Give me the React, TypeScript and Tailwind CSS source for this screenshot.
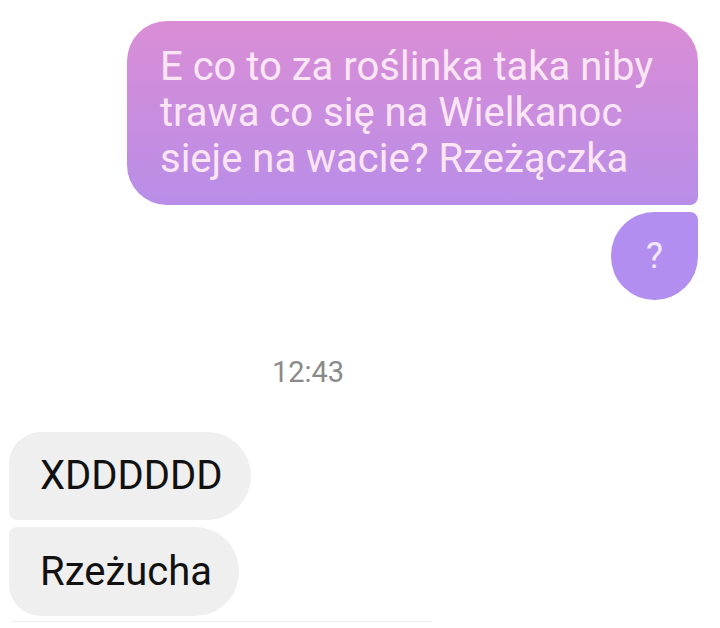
import React from 'react';

const App: React.FC = () => {
  return (
    <div className="w-[720px] h-[628px] bg-white overflow-hidden flex flex-col font-['Roboto',sans-serif]">
      {/* Sent messages */}
      <div className="flex flex-col items-end pr-[22px] pt-[21px] gap-[7px]">
        <div className="w-[571px] h-[184px] rounded-[40px] rounded-br-[8px] bg-gradient-to-b from-[#da8dd5] to-[#b88de8] pl-[33px] pt-[23px] text-[40px] leading-[46px] text-[#fce6f6]">
          E co to za roślinka taka niby
          <br />
          trawa co się na Wielkanoc
          <br />
          sieje na wacie? Rzeżączka
        </div>
        <div className="w-[87px] h-[88px] rounded-[44px] rounded-tr-[8px] bg-[#b28ef0] flex items-center justify-center text-[36px] text-[#f3e8ff]">
          ?
        </div>
      </div>

      {/* Timestamp */}
      <div className="mt-[55px] w-[616px] text-center text-[29px] leading-[34px] text-[#8a8a8a]">12:43</div>

      {/* Received messages */}
      <div className="mt-[43px] flex flex-col items-start pl-[9px] gap-[7px]">
        <div className="h-[88px] w-[242px] rounded-[44px] rounded-l-[32px] rounded-bl-[8px] bg-[#efefef] flex items-center pl-[31px] text-[40px] text-[#111]">
          XDDDDDD
        </div>
        <div className="h-[89px] w-[230px] rounded-[44px] rounded-l-[32px] rounded-tl-[8px] bg-[#efefef] flex items-center pl-[31px] text-[40px] text-[#111]">
          Rzeżucha
        </div>
      </div>
      <div className="mt-[5px] ml-[12px] w-[420px] h-px bg-[#eeeeee]" />
    </div>
  );
};

export default App;
